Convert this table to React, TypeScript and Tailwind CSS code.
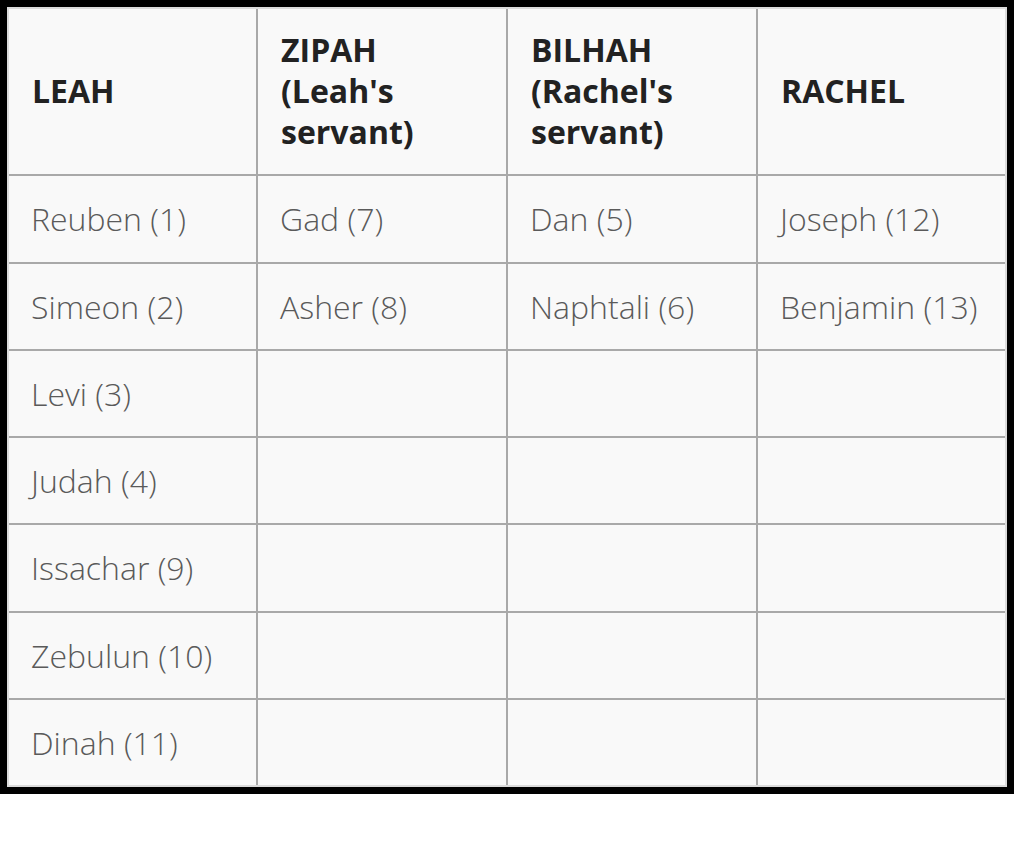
import React from "react";

const headers = [
  ["LEAH"],
  ["ZIPAH", "(Leah's", "servant)"],
  ["BILHAH", "(Rachel's", "servant)"],
  ["RACHEL"],
];

const rows = [
  ["Reuben (1)", "Gad (7)", "Dan (5)", "Joseph (12)"],
  ["Simeon (2)", "Asher (8)", "Naphtali (6)", "Benjamin (13)"],
  ["Levi (3)", "", "", ""],
  ["Judah (4)", "", "", ""],
  ["Issachar (9)", "", "", ""],
  ["Zebulun (10)", "", "", ""],
  ["Dinah (11)", "", "", ""],
];

export default function App() {
  return (
    <div className="w-[1024px] h-[842px] bg-white" style={{ fontFamily: '"Open Sans", "Liberation Sans", sans-serif' }}>
      <div className="w-[1014px] h-[794px] border-[7px] border-black">
        <div className="w-full h-full border-2 border-[#dcdcdc] bg-[#f9f9f9] grid grid-cols-[249px_250px_250px_247px] grid-rows-[167px_88px_87px_87px_87px_88px_87px_85px]">
          {headers.map((h, i) => (
            <div
              key={"h" + i}
              className={
                "flex flex-col justify-center pl-[23px] pb-[2px] border-b-2 border-[#a9a9a9] text-[32px] leading-[41px] font-bold text-[#222222] " +
                (i < 3 ? "border-r-2" : "")
              }
            >
              {h.map((l, j) => (
                <span key={j}>{l}</span>
              ))}
            </div>
          ))}
          {rows.map((r, ri) =>
            r.map((c, ci) => (
              <div
                key={ri + "-" + ci}
                className={
                  "flex items-center pl-[22px] border-[#a9a9a9] text-[32px] font-light text-[#5a5a5a] " +
                  (ci < 3 ? "border-r-2 " : "") +
                  (ri < 6 ? "border-b-2" : "")
                }
              >
                {c}
              </div>
            ))
          )}
        </div>
      </div>
    </div>
  );
}
